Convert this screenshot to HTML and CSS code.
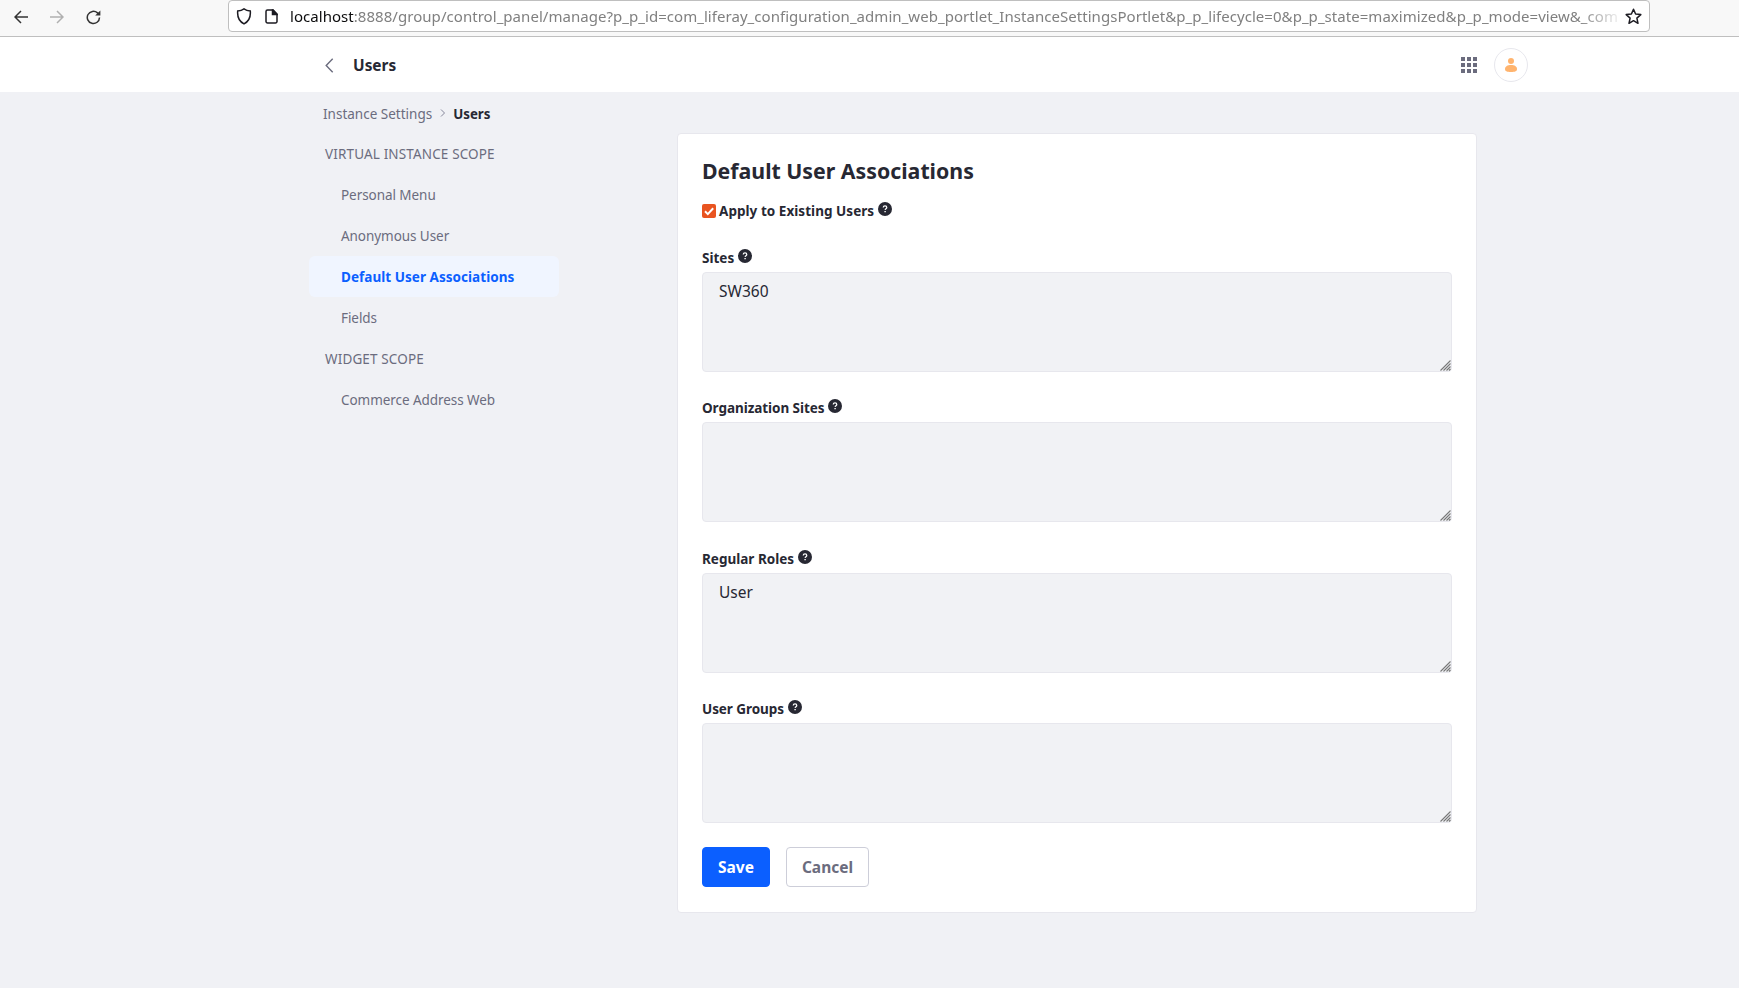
FILE: index.html
```
<!DOCTYPE html>
<html lang="en">
<head>
<meta charset="utf-8">
<title>Users</title>
<link rel="stylesheet" href="styles.css">
</head>
<body>
<svg class="defs" width="0" height="0" aria-hidden="true">
  <symbol id="help" viewBox="0 0 14 14">
    <circle cx="7" cy="7" r="7" fill="#272833"/>
    <path d="M5.2 5.5C5.3 4.3 6.1 3.9 7 3.9c1.1 0 1.8.6 1.8 1.5 0 1.2-1.6 1.3-1.7 2.5" fill="none" stroke="#fff" stroke-width="1.2"/>
    <path d="M6.4 8.9h1.4v1.3H6.4z" fill="#fff"/>
  </symbol>
  <symbol id="grip" viewBox="0 0 11 11">
    <path d="M.5 10.5l10-10M3.5 10.5l7-7M6.5 10.5l4-4M9 10.5L10.5 9" fill="none" stroke="#777" stroke-width="1.1"/>
  </symbol>
</svg>

<div class="browser">
  <div class="browser-nav">
    <svg width="14" height="14" viewBox="0 0 14 14" class="ico"><path d="M14 7H1M7 1L1 7l6 6"/></svg>
    <svg width="14" height="14" viewBox="0 0 14 14" class="ico ico-off"><path d="M0 7h13M7 1l6 6-6 6"/></svg>
    <svg width="15" height="15" viewBox="0 0 15 15" class="ico"><path d="M13.5 7.5a6.1 6.1 0 1 1-2-4.6l1.3 1.3"/><path d="M14.4 .4v5.2H9.2z" fill="#333" stroke="none"/></svg>
  </div>
  <div class="urlbar">
    <svg width="16" height="17" viewBox="0 0 16 17" class="ico url-shield"><path d="M8 .9c1.7 1.3 3.9 2 6.3 2.1.5 5.6-1.2 10.3-6.3 12.8C2.9 13.3 1.2 8.6 1.7 3 4.1 2.9 6.3 2.2 8 .9z"/></svg>
    <svg width="13" height="15" viewBox="0 0 13 15" class="ico url-page"><path d="M2.5 1H8l4 4v7.5a1.5 1.5 0 0 1-1.5 1.5h-8A1.5 1.5 0 0 1 1 12.5v-10A1.5 1.5 0 0 1 2.5 1z"/><path d="M7.5 1v4.5H12L8 1z" fill="#1c1b22"/></svg>
    <div class="url"><span class="url-host">localhost</span>:8888/group/control_panel/manage?p_p_id=com_liferay_configuration_admin_web_portlet_InstanceSettingsPortlet&amp;p_p_lifecycle=0&amp;p_p_state=maximized&amp;p_p_mode=view&amp;_com</div>
    <svg width="17" height="17" viewBox="0 0 17 17" class="ico url-star"><path d="M8.5 1.3l2.1 4.7 5.2.6-3.9 3.5 1.1 5.2-4.5-2.6L4 15.300l1.100-5.200L1.200 6.600l5.200-.6z" stroke-linejoin="round"/></svg>
  </div>
</div>

<header class="topbar">
  <svg width="9" height="15" viewBox="0 0 9 15" class="back"><path d="M7.7 .8L1.2 7.5l6.5 6.7"/></svg>
  <h1 class="topbar-title">Users</h1>
  <svg width="16" height="16" viewBox="0 0 16 16" class="apps"><path d="M0 0h4v4H0zM6 0h4v4H6zM12 0h4v4h-4zM0 6h4v4H0zM6 6h4v4H6zM12 6h4v4h-4zM0 12h4v4H0zM6 12h4v4H6zM12 12h4v4h-4z"/></svg>
  <span class="avatar"><svg width="12" height="14" viewBox="0 0 12 14"><circle cx="6" cy="3" r="3"/><path d="M0 11c0-2.5 2.5-4 6-4s6 1.5 6 4c0 2.2-1.8 3-6 3s-6-.8-6-3z"/></svg></span>
</header>

<main class="page">
  <div class="side">
    <nav class="crumbs">
      <span>Instance Settings</span>
      <svg width="6" height="8" viewBox="0 0 6 8" class="crumb-sep"><path d="M1 .5L4.5 4 1 7.5"/></svg>
      <b>Users</b>
    </nav>
    <ul class="menu">
      <li class="menu-head">VIRTUAL INSTANCE SCOPE</li>
      <li class="menu-item">Personal Menu</li>
      <li class="menu-item">Anonymous User</li>
      <li class="menu-item menu-active">Default User Associations</li>
      <li class="menu-item">Fields</li>
      <li class="menu-head">WIDGET SCOPE</li>
      <li class="menu-item">Commerce Address Web</li>
    </ul>
  </div>

  <form class="card">
    <h2 class="card-title">Default User Associations</h2>
    <div class="check-row">
      <svg width="14" height="14" viewBox="0 0 14 14" class="check"><rect width="14" height="14" rx="2" fill="#e95420"/><path d="M3 7.3l2.8 2.8L11.2 4.3" fill="none" stroke="#fff" stroke-width="2"/></svg>
      <span>Apply to Existing Users</span>
      <svg class="help"><use href="#help"/></svg>
    </div>
    <div class="field">
      <label class="label">Sites <svg class="help"><use href="#help"/></svg></label>
      <div class="box"><textarea class="area">SW360</textarea><svg class="grip"><use href="#grip"/></svg></div>
    </div>
    <div class="field field-short">
      <label class="label label-tight">Organization Sites <svg class="help"><use href="#help"/></svg></label>
      <div class="box"><textarea class="area"></textarea><svg class="grip"><use href="#grip"/></svg></div>
    </div>
    <div class="field">
      <label class="label">Regular Roles <svg class="help"><use href="#help"/></svg></label>
      <div class="box"><textarea class="area">User</textarea><svg class="grip"><use href="#grip"/></svg></div>
    </div>
    <div class="field">
      <label class="label label-tight">User Groups <svg class="help"><use href="#help"/></svg></label>
      <div class="box"><textarea class="area"></textarea><svg class="grip"><use href="#grip"/></svg></div>
    </div>
    <div class="actions">
      <button type="button" class="btn btn-save">Save</button>
      <button type="button" class="btn btn-cancel">Cancel</button>
    </div>
  </form>
</main>
</body>
</html>
```
FILE: styles.css
```
* { box-sizing: border-box; }
body {
  margin: 0;
  height: 988px;
  overflow: hidden;
  background: #f0f1f5;
  color: #272833;
  font: 13.5px/20px "Noto Sans", "Open Sans", sans-serif;
}
svg { display: block; flex: none; }
.defs { position: absolute; }
.ico { fill: none; stroke: #333; stroke-width: 1.5; }
.ico-off { stroke: #b0b0b0; }

/* browser toolbar */
.browser {
  display: flex;
  height: 37px;
  padding-right: 89px;
  background: #f8f8f8;
  border-bottom: 1px solid #bfbfbf;
}
.browser-nav {
  display: flex;
  align-items: center;
  gap: 22px;
  width: 228px;
  height: 34px;
  padding-left: 14px;
}
.urlbar {
  display: flex;
  align-items: center;
  flex: 1;
  min-width: 0;
  height: 32px;
  padding: 0 7px;
  background: #fff;
  border: 1px solid #bfbfbf;
  border-radius: 4px;
}
.urlbar .ico { stroke: #1c1b22; }
.url-page { margin: 0 12px 0 13px; }
.url {
  width: 1332px;
  overflow: hidden;
  white-space: nowrap;
  color: #808080;
  font-size: 15px;
  letter-spacing: .045px;
  -webkit-mask-image: linear-gradient(to right, #000 1290px, transparent 1334px);
  mask-image: linear-gradient(to right, #000 1290px, transparent 1334px);
}
.url-host { color: #0c0c0d; }
.url-star { margin-left: auto; }

/* page header */
.topbar {
  display: flex;
  align-items: center;
  height: 55px;
  padding: 1px 211px 0 325px;
  background: #fff;
}
.back { fill: none; stroke: #6b6c7e; stroke-width: 1.4; }
.topbar-title { flex: 1; margin: 1px 0 0 19px; font-size: 15.4px; line-height: 24px; }
.apps { fill: #6b6c7e; }
.avatar {
  display: grid;
  place-items: center;
  width: 34px;
  height: 34px;
  margin-left: 17px;
  border: 1px solid #e7e7ed;
  border-radius: 50%;
}
.avatar svg { fill: #ffb46e; }

/* sidebar */
.page { display: flex; padding-left: 309px; }
.side { width: 368px; }
.crumbs {
  display: flex;
  align-items: center;
  height: 41px;
  padding: 3px 0 0 14px;
  color: #6b6c7e;
}
.crumbs b { color: #272833; font-size: 13.3px; }
.crumb-sep { margin: 0 7px 2px 8px; fill: none; stroke: #85869a; }
.menu { width: 250px; margin: 0; padding: 0; list-style: none; color: #6b6c7e; }
.menu-head, .menu-item { height: 41px; padding-left: 16px; line-height: 43px; letter-spacing: .14px; }
.menu-item { padding-left: 32px; letter-spacing: -.06px; }
.menu-active {
  background: #f0f5ff;
  border-radius: 6px;
  color: #0b5fff;
  font-weight: 700;
  letter-spacing: .04px;
}

/* settings form */
.card {
  width: 800px;
  height: 780px;
  margin-top: 41px;
  padding: 21px 24px 0;
  background: #fff;
  border: 1px solid #e7e7ed;
  border-radius: 4px;
}
.card-title { margin: 0; font-size: 21.3px; line-height: 32px; }
.check-row {
  display: flex;
  align-items: center;
  height: 20px;
  margin: 14px 0 27px;
  font-weight: 700;
  letter-spacing: .04px;
}
.check { margin: 0 3px 1px 0; }
.check-row .help { margin: -4px 0 0 4px; }
.help { width: 14px; height: 14px; margin-bottom: 4px; }
.field { height: 124px; margin-bottom: 26px; }
.field-short { margin-bottom: 27px; }
.label { display: flex; align-items: center; gap: 4px; height: 20px; margin-bottom: 4px; font-weight: 700; }
.label-tight { letter-spacing: -.06px; gap: 3.5px; }
.box { position: relative; height: 100px; }
.area {
  display: block;
  width: 750px;
  height: 100px;
  padding: 6px 16px;
  resize: none;
  background: #f1f2f5;
  border: 1px solid #e7e7ed;
  border-radius: 4px;
  color: #272833;
  font: 15.5px/24px "Noto Sans", "Open Sans", sans-serif;
}
.grip { position: absolute; right: 1px; bottom: 1px; width: 11px; height: 11px; }
.actions { display: flex; gap: 16px; margin-top: -2px; }
.btn {
  height: 40px;
  padding: 0;
  border: 1px solid #cdced9;
  border-radius: 4px;
  background: #fff;
  color: #6b6c7e;
  font: 700 15.5px/24px "Noto Sans", "Open Sans", sans-serif;
}
.btn-save { width: 68px; background: #0b5fff; border-color: #0b5fff; color: #fff; }
.btn-cancel { width: 83px; }
```
